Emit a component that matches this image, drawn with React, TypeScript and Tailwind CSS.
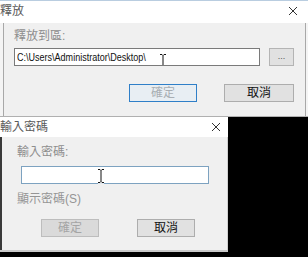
import React from "react";

function IBeam({ className }: { className?: string }) {
  return (
    <svg className={className} width="8" height="16" viewBox="0 0 8 16">
      <path d="M1 1.5h2l1 1 1-1h2M4 2.5v11M1 14.5h2l1-1 1 1h2" stroke="#fff" strokeWidth="2.6" fill="none" />
      <path d="M1 1.5h2l1 1 1-1h2M4 2.5v11M1 14.5h2l1-1 1 1h2" stroke="#111" strokeWidth="1" fill="none" />
    </svg>
  );
}

function CloseX({ className }: { className?: string }) {
  return (
    <svg className={className} width="10" height="10" viewBox="0 0 10 10">
      <path d="M1 1l8 8M9 1l-8 8" stroke="#333" strokeWidth="1" />
    </svg>
  );
}

export default function App() {
  return (
    <div className="w-[308px] h-[257px] bg-black overflow-hidden font-['Liberation_Sans','Noto_Sans_CJK_TC',sans-serif] text-[12px] leading-none">
      {/* 釋放 window */}
      <div className="h-[117px] bg-[#f4f4f4] flex flex-col border-t border-[#b9cde0] border-b border-b-[#b0b0b0]">
        <div className="h-[22px] bg-white flex items-center justify-between pr-[10px] text-[#5a5a5a]">
          <span className="mt-[-2px] text-[12px]">釋放</span>
          <CloseX className="mt-[-2px]" />
        </div>
        <div className="flex-1 flex flex-col ml-[3px] mr-[2px] border-l border-r border-[#a8a8a8] bg-[#f0f0f0] pl-[10px] pr-[11px] pt-[7px]">
          <div className="text-[12px] text-[#8e8e8e] h-[13px]">釋放到區:</div>
          <div className="flex gap-[9px] mt-[5px] h-[18px]">
            <div className="relative flex-1 bg-white border border-[#7a7a7a] flex items-center pl-[2px] overflow-hidden">
              <span className="inline-block origin-left scale-x-[0.82] whitespace-nowrap text-[11px] text-[#111]">
                C:\Users\Administrator\Desktop\
              </span>
              <IBeam className="absolute left-[144px] top-[4px]" />
            </div>
            <div className="w-[25px] bg-[#e1e1e1] border border-[#b4b4b4] flex items-end justify-center pb-[4px] text-[9px] text-[#555]">
              ...
            </div>
          </div>
          <div className="flex justify-end gap-[27px] mt-[18px]">
            <div className="w-[68px] h-[18px] bg-[#e8eef3] border border-[#2f7fc8] flex items-center justify-center text-[#a9aeb3]">
              確定
            </div>
            <div className="w-[70px] h-[18px] bg-[#e1e1e1] border border-[#adadad] flex items-center justify-center text-[#111]">
              取消
            </div>
          </div>
        </div>
      </div>

      {/* 輸入密碼 window */}
      <div className="w-[228px] h-[135px] flex flex-col border-b-2 border-[#c8c8c8]">
        <div className="h-[20px] bg-white flex items-center justify-between pr-[7px] text-[#5a5a5a]">
          <span className="text-[12px]">輸入密碼</span>
          <CloseX />
        </div>
        <div className="relative flex-1 bg-[#f0f0f0] border-l-2 border-[#3a3a3a] border-r border-r-[#d0d0d0] pl-[15px] pr-[18px] pt-[9px]">
          <div className="text-[12px] text-[#8e8e8e] h-[13px]">輸入密碼:</div>
          <div className="relative ml-[4px] mt-[7px] h-[18px] bg-white border border-[#7da2c0]">
            <IBeam className="absolute left-[75px] top-[1px]" />
          </div>
          <div className="mt-[9px] text-[12px] text-[#959595]">顯示密碼(S)</div>
          <div className="flex gap-[38px] ml-[24px] mt-[14px]">
            <div className="w-[58px] h-[18px] bg-[#dadada] border border-[#bdbdbd] flex items-center justify-center text-[#a5a5a5]">
              確定
            </div>
            <div className="w-[58px] h-[18px] bg-[#e1e1e1] border border-[#adadad] flex items-center justify-center text-[#111]">
              取消
            </div>
          </div>
        </div>
      </div>
    </div>
  );
}
